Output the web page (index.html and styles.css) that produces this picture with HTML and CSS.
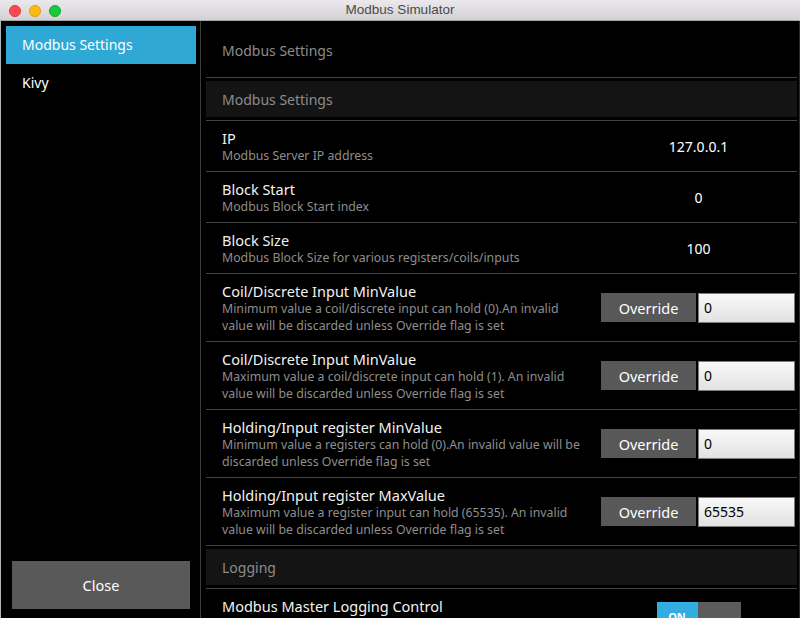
FILE: index.html
```html
<!DOCTYPE html>
<html>
<head>
<meta charset="utf-8">
<title>Modbus Simulator</title>
<link rel="stylesheet" href="styles.css">
</head>
<body>
<div class="window">
  <header class="titlebar">
    <div class="lights">
      <span class="light red"></span>
      <span class="light yellow"></span>
      <span class="light green"></span>
    </div>
    <div class="title">Modbus Simulator</div>
    <div></div>
  </header>
  <div class="main">
    <aside class="sidebar">
      <nav class="menu">
        <div class="menu-item active">Modbus Settings</div>
        <div class="menu-item">Kivy</div>
      </nav>
      <button class="close">Close</button>
    </aside>
    <section class="panel">
      <div class="panel-header">Modbus Settings</div>

      <div class="section"><div class="section-title">Modbus Settings</div></div>

      <div class="row">
        <div class="text"><div class="name">IP</div><div class="desc">Modbus Server IP address</div></div>
        <div class="control"><span class="value">127.0.0.1</span></div>
      </div>
      <div class="row">
        <div class="text"><div class="name">Block Start</div><div class="desc">Modbus Block Start index</div></div>
        <div class="control"><span class="value">0</span></div>
      </div>
      <div class="row">
        <div class="text"><div class="name">Block Size</div><div class="desc">Modbus Block Size for various registers/coils/inputs</div></div>
        <div class="control"><span class="value">100</span></div>
      </div>
      <div class="row tall">
        <div class="text"><div class="name">Coil/Discrete Input MinValue</div><div class="desc">Minimum value a coil/discrete input can hold (0).An invalid<br>value will be discarded unless Override flag is set</div></div>
        <div class="control start"><button class="override">Override</button><span class="field">0</span></div>
      </div>
      <div class="row tall">
        <div class="text"><div class="name">Coil/Discrete Input MinValue</div><div class="desc">Maximum value a coil/discrete input can hold (1). An invalid<br>value will be discarded unless Override flag is set</div></div>
        <div class="control start"><button class="override">Override</button><span class="field">0</span></div>
      </div>
      <div class="row tall">
        <div class="text"><div class="name">Holding/Input register MinValue</div><div class="desc">Minimum value a registers can hold (0).An invalid value will be<br>discarded unless Override flag is set</div></div>
        <div class="control start"><button class="override">Override</button><span class="field">0</span></div>
      </div>
      <div class="row tall">
        <div class="text"><div class="name">Holding/Input register MaxValue</div><div class="desc">Maximum value a register input can hold (65535). An invalid<br>value will be discarded unless Override flag is set</div></div>
        <div class="control start"><button class="override">Override</button><span class="field">65535</span></div>
      </div>

      <div class="section"><div class="section-title">Logging</div></div>

      <div class="row">
        <div class="text"><div class="name">Modbus Master Logging Control</div><div class="desc">&nbsp;</div></div>
        <div class="control"><div class="switch"><span class="switch-on">ON</span><span class="switch-knob"></span></div></div>
      </div>
    </section>
  </div>
</div>
</body>
</html>
```
FILE: styles.css
```css
* { box-sizing: border-box; }
html, body { margin: 0; padding: 0; background: #000; }
body { width: 800px; height: 618px; overflow: hidden; font-family: "Noto Sans", "DejaVu Sans", sans-serif; }

.window { display: flex; flex-direction: column; width: 800px; height: 618px; }

.titlebar {
  height: 21px;
  flex: none;
  display: grid;
  grid-template-columns: 1fr auto 1fr;
  align-items: center;
  background: linear-gradient(#ebe9eb, #d3d1d3);
  border-bottom: 1px solid #a8a8a8;
}
.lights { display: flex; gap: 8px; padding-left: 9px; padding-top: 1px; }
.light { width: 12px; height: 12px; border-radius: 50%; display: block; }
.light.red { background: #fd4a50; border: 1px solid #e0343c; }
.light.yellow { background: #fdbb10; border: 1px solid #dea012; }
.light.green { background: #19c83c; border: 1px solid #12a82e; }
.title { font-family: "Liberation Sans", Arial, sans-serif; font-size: 13.5px; color: #4a4a4a; line-height: 20px; }

.main { flex: 1; display: flex; border-left: 1px solid #b4b4b4; min-height: 0; }

.sidebar {
  width: 200px;
  flex: none;
  display: flex;
  flex-direction: column;
  justify-content: space-between;
  padding: 5px 4px 9px 5px;
  border-right: 1px solid #3d3d3d;
}
.menu-item { height: 38px; line-height: 38px; padding-left: 16px; color: #fff; font-size: 14px; }
.menu-item.active { background: #2fa8d6; }
.close {
  margin: 0 6px;
  height: 48px;
  border: none;
  background: #595959;
  color: #fff;
  font-family: "Noto Sans", sans-serif;
  font-size: 14.5px;
}

.panel {
  flex: 1;
  padding: 0 2px 0 5px;
  border-right: 1px solid #2c2c2c;
  overflow: hidden;
}
.panel-header {
  height: 57px;
  padding-top: 2px;
  line-height: 56px;
  padding-left: 16px;
  color: #8c8c8c;
  font-size: 14px;
  border-bottom: 1px solid #444;
}
.section { padding: 3px 0; border-bottom: 1px solid #444; }
.section-title {
  height: 36px;
  line-height: 37px;
  padding-left: 16px;
  background: #141414;
  color: #8c8c8c;
  font-size: 14px;
}

.row {
  height: 51px;
  display: flex;
  align-items: center;
  border-bottom: 1px solid #444;
}
.row.tall { height: 68px; }
.text { flex: 1; padding-left: 16px; }
.name { color: #f2f2f2; font-size: 14.5px; line-height: 18px; }
.desc { color: #8e8e8e; font-size: 12.3px; line-height: 17px; }

.control {
  width: 195px;
  margin-right: 1px;
  display: flex;
  align-items: center;
  justify-content: center;
  gap: 2px;
}
.control.start { justify-content: flex-start; }
.value { color: #fff; font-size: 14px; }
.override {
  width: 95px;
  height: 29px;
  border: none;
  background: #585858;
  color: #fff;
  font-family: "Noto Sans", sans-serif;
  font-size: 14.5px;
  padding: 0;
}
.field {
  width: 97px;
  height: 30px;
  display: flex;
  align-items: center;
  padding-left: 5px;
  border: 1px solid #7a7a7a;
  background: linear-gradient(#f8f8f8, #e2e2e2);
  color: #000;
  font-size: 14px;
}

.switch { display: flex; width: 84px; height: 24px; }
.switch-on {
  width: 41px;
  background: #33ade1;
  color: #fff;
  font-size: 11px;
  font-weight: bold;
  display: flex;
  align-items: center;
  justify-content: center;
  padding-top: 4px;
}
.switch-knob { flex: 1; background: #5c5c5c; }
```
